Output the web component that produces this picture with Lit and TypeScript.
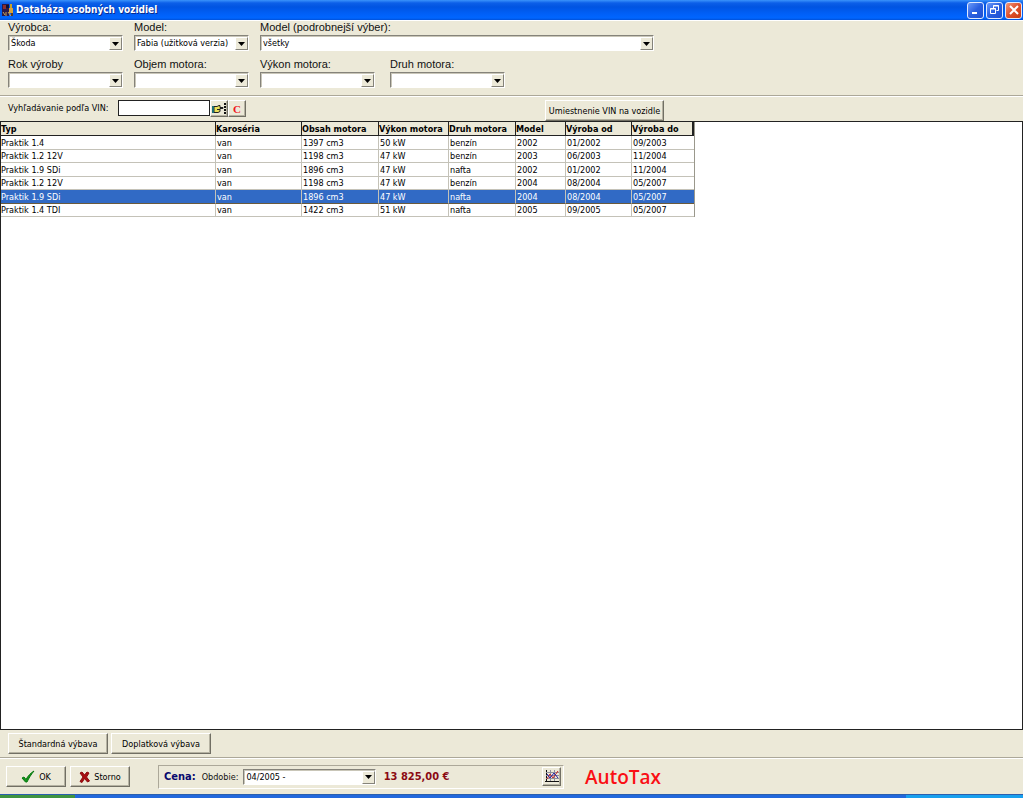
import { LitElement, html, css, svg, TemplateResult } from "lit";
import { customElement, property, state } from "lit/decorators.js";

/** Sunken drop-down with a raised arrow button. */
@customElement("combo-box")
class ComboBox extends LitElement {
  @property() label = "";
  @property() value = "";
  @property({ type: Boolean }) inline = false;

  static styles = css`
    :host { display: block; }
    .field { display: flex; flex-direction: column; gap: 1px; }
    .label {
      font: 11px/13px "Liberation Sans", Arial, sans-serif;
      color: #111; white-space: nowrap;
    }
    .box {
      display: grid; grid-template-columns: 1fr 13px;
      height: 16px; box-sizing: border-box; background: #fff;
      border: 1px solid; border-color: #85837a #fff #fff #85837a;
      box-shadow: inset 1px 1px #c9c6b8;
    }
    .select {
      grid-area: 1 / 1 / 2 / 3; appearance: none; border: 0; margin: 0;
      padding: 0 14px 0 2px; background: transparent; min-width: 0; width: 100%;
      font: 9px/14px "DejaVu Sans Condensed", "DejaVu Sans", sans-serif;
      color: #000; outline: none; border-radius: 0;
    }
    .arrow {
      grid-area: 1 / 2 / 2 / 3; pointer-events: none; margin: 1px 0 0 0;
      background: #ece9d8; display: flex; align-items: center; justify-content: center;
      border: 1px solid; border-color: #fff #85837a #85837a #fff;
    }
    .inline .label { font: 9px/16px "DejaVu Sans Condensed", "DejaVu Sans", sans-serif; }
    .inline { flex-direction: row; gap: 5px; }
    .inline .box { flex: 1; }
  `;

  render() {
    return html`<div class="field ${this.inline ? "inline" : ""}">
      <label class="label" for="s">${this.label}</label>
      <div class="box">
        <select class="select" id="s"><option>${this.value}</option></select>
        <span class="arrow"><svg width="7" height="4" viewBox="0 0 7 4"><path d="M0 0h7L3.500 4z" fill="#000"/></svg></span>
      </div>
    </div>`;
  }
}

const COLUMNS = [
  { name: "Typ", width: 215 },
  { name: "Karoséria", width: 86 },
  { name: "Obsah motora", width: 77 },
  { name: "Výkon motora", width: 70 },
  { name: "Druh motora", width: 67 },
  { name: "Model", width: 50 },
  { name: "Výroba od", width: 66 },
  { name: "Výroba do", width: 62 },
];

const ROWS = [
  ["Praktik 1.4", "van", "1397 cm3", "50 kW", "benzín", "2002", "01/2002", "09/2003"],
  ["Praktik 1.2 12V", "van", "1198 cm3", "47 kW", "benzín", "2003", "06/2003", "11/2004"],
  ["Praktik 1.9 SDi", "van", "1896 cm3", "47 kW", "nafta", "2002", "01/2002", "11/2004"],
  ["Praktik 1.2 12V", "van", "1198 cm3", "47 kW", "benzín", "2004", "08/2004", "05/2007"],
  ["Praktik 1.9 SDi", "van", "1896 cm3", "47 kW", "nafta", "2004", "08/2004", "05/2007"],
  ["Praktik 1.4 TDI", "van", "1422 cm3", "51 kW", "nafta", "2005", "09/2005", "05/2007"],
];

const icon = (w: number, h: number, body: TemplateResult) =>
  html`<svg class="icon" width=${w} height=${h} viewBox="0 0 ${w} ${h}" aria-hidden="true">${body}</svg>`;

const appIcon = icon(13, 14, svg`
  <path d="M1 1h7v12H1z" fill="#2b1a4a"/><path d="M2 2h3v4H2z" fill="#8c2f2f"/>
  <path d="M5 2h3v3H5z" fill="#101030"/><path d="M9 1h2v4H9z" fill="#c9a227"/>
  <path d="M8 5h4v5H8z" fill="#d7a33a"/><path d="M2 9l2 3M5 9v4M7 9l3 4" stroke="#c8a45a" stroke-width="1" fill="none"/>
  <path d="M10 10h2v3h-2z" fill="#5a3a20"/>`);
const minimizeIcon = icon(12, 12, svg`<path d="M2 8h5v2H2z" fill="#fff"/>`);
const restoreIcon = icon(12, 12, svg`
  <path d="M4.500 4V1.500h5v5H7.500M4 2h6" fill="none" stroke="#fff"/>
  <path d="M1.500 4.500h5v5h-5zM1 5h6" fill="none" stroke="#fff"/>`);
const closeIcon = icon(12, 12, svg`<path d="M2 2l8 8M10 2l-8 8" stroke="#fff" stroke-width="2"/>`);
const handIcon = icon(14, 11, svg`
  <path d="M2 3.500h3l2-1h1v2h3v1H8v3l-2 1H2z" fill="#e9e05a" stroke="#222"/>
  <path d="M0 3h2v7H0z" fill="#1d6e78"/><path d="M5 6.500h3" stroke="#222"/>
  <path d="M13 0v11" stroke="#111" stroke-width="2" stroke-dasharray="2 1"/>`);
const checkIcon = icon(14, 13, svg`<path d="M1 8l2-1 2 2.500C7 6 9.500 3 13 1 10 4.500 8 8 6 12H4.500z" fill="#12951c" stroke="#08780f"/>`);
const crossIcon = icon(11, 12, svg`<path d="M1 2l2-1 2.500 3L8 1l2 1-2.500 4L10.500 10l-2 1-3-3.500L3 11.500l-2-1L4 6z" fill="#a80f12" stroke="#8c0a0d"/>`);
const chartIcon = icon(14, 13, svg`
  <path d="M1.500 0v12M0 11.500h14" stroke="#111"/>
  <path d="M1 2.500h13M1 5.500h13M1 8.500h13M5.500 0v11M9.500 0v11" stroke="#8e8e9c"/>
  <path d="M2 9l3-5 3 4 5-7" stroke="#c22" fill="none"/><path d="M2 4l3 4 4-5 4 5" stroke="#22a" fill="none"/>`);

@customElement("app-root")
class AppRoot extends LitElement {
  @state() selected = 4;

  static styles = css`
    :host {
      display: flex; flex-direction: column; height: 100vh; overflow: hidden;
      background: #ece9d8; color: #000;
      font: 9px/12px "DejaVu Sans Condensed", "DejaVu Sans", sans-serif;
    }
    button {
      font: inherit; color: inherit; margin: 0; padding: 0 3px; height: 21px; box-sizing: border-box;
      background: #ece9d8; border: 1px solid; border-color: #fff #716f64 #716f64 #fff;
      box-shadow: inset -1px -1px #b5b2a2; border-radius: 0; white-space: nowrap;
      display: flex; align-items: center; justify-content: center; gap: 4px;
    }
    .icon { display: block; flex: none; }
    .title {
      display: flex; align-items: center; gap: 2px; height: 20px; box-sizing: border-box; padding: 0 1px;
      background: linear-gradient(#3a93fb 0, #0c5fe8 3px, #0054e2 7px, #0060f8 14px, #0066ff 18px, #0050d8 20px);
    }
    .caption { flex: 1; margin: 0; font-size: 10px; line-height: 14px; font-weight: bold; color: #fff; text-shadow: 1px 1px #0a2a8c; }
    .title .sys {
      width: 17px; height: 17px; padding: 0; border: 1px solid #dfe9ff; border-radius: 3px; box-shadow: none;
      background: linear-gradient(135deg, #6c9bfa, #2a5fe0 50%, #1f50cf);
    }
    .title .close { background: linear-gradient(135deg, #f0987c, #e0512c 50%, #c63c14); }
    .filters {
      display: flex; flex-direction: column; gap: 7px; padding: 0 8px 7px;
      border-top: 1px solid #fff; border-bottom: 1px solid #aca899;
    }
    .line { display: flex; gap: 11px; }
    .line > * { flex: none; width: 115px; }
    .line .wide { width: 394px; }
    .line .last { margin-left: 4px; }
    .vin { display: flex; align-items: flex-start; height: 25px; box-sizing: border-box; padding: 3px 8px 0; border-top: 1px solid #fff; }
    .vin-label { width: 110px; line-height: 16px; }
    .vin-input { width: 92px; height: 16px; box-sizing: border-box; border: 1px solid #222; background: #fff; padding: 0 2px; font: inherit; border-radius: 0; }
    .vin .tool { width: 18px; height: 17px; padding: 0; }
    .vin .clear { font: bold 11px/12px "Liberation Serif", serif; color: #f0141c; }
    .vin .place { margin-left: 299px; width: 119px; }
    .data { flex: 1; min-height: 0; background: #fff; border: 1px solid #222; }
    .grid { border-collapse: separate; border-spacing: 0; table-layout: fixed; width: 693px; border-right: 1px solid #9a988c; box-sizing: border-box; }
    .grid th, .grid td { padding: 0 0 0 1px; box-sizing: border-box; overflow: hidden; white-space: nowrap; text-align: left; line-height: 12px; }
    .grid th { height: 14px; padding-left: 0; background: #ece9d8; border-right: 1px solid #222; border-bottom: 1px solid #222; font-weight: bold; }
    .grid th:last-child { border-right-width: 2px; }
    .grid td { height: 14px; border-right: 1px solid #c4c2b8; border-bottom: 1px solid #c4c2b8; }
    .grid tr:nth-child(even) td { height: 13px; }
    .grid td:first-child { padding-left: 0; }
    .grid td:last-child { border-right: 0; }
    .grid .active td { background: #316ac5; color: #fff; border-bottom-color: #6a5a3c; }
    .extras { display: flex; align-items: center; gap: 3px; height: 27px; padding: 0 8px; border-bottom: 1px solid #aca899; }
    .extras button { width: 100px; }
    .footer { display: flex; align-items: center; height: 35px; padding: 0 6px; border-top: 1px solid #fff; }
    .footer .action { width: 60px; margin-right: 4px; }
    .price {
      display: flex; align-items: center; box-sizing: border-box; height: 24px; width: 406px; margin: 0 21px 0 24px; padding: 0 2px 0 5px;
      border: 1px solid; border-color: #aca899 #fff #fff #aca899;
    }
    .price-label { font-size: 11px; font-weight: bold; color: #0a0a6e; margin-right: 6px; }
    .period { width: 174px; }
    .amount { flex: 1; margin-left: 8px; font-size: 11px; font-weight: bold; color: #8b0a12; }
    .price .chart { width: 19px; height: 19px; padding: 0; }
    .brand { font: 600 19px/24px "Open Sans", sans-serif; color: #fa0f14; }
    .taskbar { height: 4px; flex: none; background: linear-gradient(90deg, #3f9440 0 75px, #2268dc 75px 906px, #18a0ee 906px); border-top: 1px solid #2a5fae; box-sizing: border-box; }
  `;

  render() {
    return html`
      <header class="title">
        ${appIcon}
        <h1 class="caption">Databáza osobných vozidiel</h1>
        <button class="sys" aria-label="Minimalizovať">${minimizeIcon}</button>
        <button class="sys" aria-label="Obnoviť">${restoreIcon}</button>
        <button class="sys close" aria-label="Zavrieť">${closeIcon}</button>
      </header>
      <section class="filters">
        <div class="line">
          <combo-box label="Výrobca:" value="Škoda"></combo-box>
          <combo-box label="Model:" value="Fabia (užitková verzia)"></combo-box>
          <combo-box class="wide" label="Model (podrobnejší výber):" value="všetky"></combo-box>
        </div>
        <div class="line">
          <combo-box label="Rok výroby"></combo-box>
          <combo-box label="Objem motora:"></combo-box>
          <combo-box label="Výkon motora:"></combo-box>
          <combo-box class="last" label="Druh motora:"></combo-box>
        </div>
      </section>
      <section class="vin">
        <label class="vin-label" for="vin">Vyhľadávanie podľa VIN:</label>
        <input class="vin-input" id="vin" type="text" />
        <button class="tool" aria-label="Hľadať">${handIcon}</button>
        <button class="tool clear">C</button>
        <button class="place">Umiestnenie VIN na vozidle</button>
      </section>
      <main class="data">
        <table class="grid">
          <colgroup>${COLUMNS.map((c) => html`<col style="width:${c.width}px" />`)}</colgroup>
          <thead><tr>${COLUMNS.map((c) => html`<th scope="col">${c.name}</th>`)}</tr></thead>
          <tbody>
            ${ROWS.map((row, i) => html`<tr class=${i === this.selected ? "active" : ""} @click=${() => (this.selected = i)}>
              ${row.map((cell) => html`<td>${cell}</td>`)}
            </tr>`)}
          </tbody>
        </table>
      </main>
      <section class="extras">
        <button>Štandardná výbava</button>
        <button>Doplatková výbava</button>
      </section>
      <footer class="footer">
        <button class="action">${checkIcon} OK</button>
        <button class="action">${crossIcon} Storno</button>
        <div class="price">
          <span class="price-label">Cena:</span>
          <combo-box class="period" inline label="Obdobie:" value="04/2005 -"></combo-box>
          <output class="amount">13 825,00 €</output>
          <button class="chart" aria-label="Graf">${chartIcon}</button>
        </div>
        <span class="brand">AutoTax</span>
      </footer>
      <div class="taskbar"></div>
    `;
  }
}
